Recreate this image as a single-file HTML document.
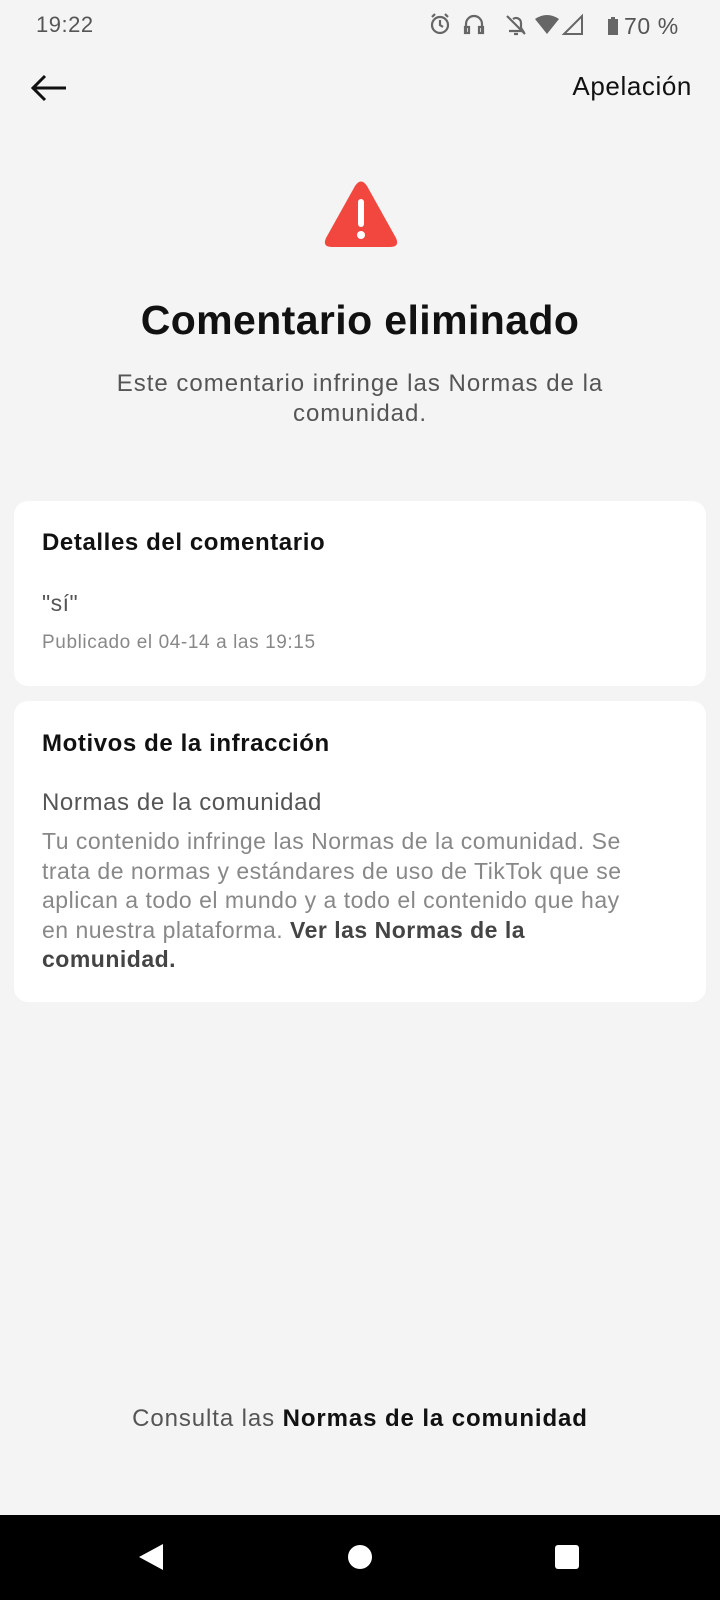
<!DOCTYPE html>
<html><head><meta charset="utf-8"><style>
*{margin:0;padding:0;box-sizing:border-box}
body{width:720px;height:1600px;background:#f4f4f4;font-family:"Liberation Sans",sans-serif;position:relative;overflow:hidden;color:#111}
.a{position:absolute}
.card{position:absolute;left:14px;width:692px;background:#fff;border-radius:14px}
</style></head><body>
<div class="a" style="left:36px;top:12px;font-size:22px;color:#555;letter-spacing:0.5px">19:22</div>
<svg class="a" style="left:428px;top:10px" width="280" height="30" viewBox="0 0 280 30">
<g fill="none" stroke="#666" stroke-width="2.2"><circle cx="12" cy="15" r="8"/><path d="M12 10v5l3 2M4 7l3-3M20 7l-3-3"/>
<path d="M38 22v-8a8 8 0 0 1 16 0v8"/><rect x="37" y="17" width="4" height="6"/><rect x="51" y="17" width="4" height="6"/>
<path d="M81 21h14l-2-3v-5a5 5 0 0 0-8-4M79 6l18 18M86 24h4"/></g>
<path d="M107 9q12-8 24 0l-12 15z" fill="#666"/><path d="M154 6v18h-18z" fill="none" stroke="#666" stroke-width="2"/>
<rect x="180" y="9" width="10" height="16" fill="#666"/><rect x="183" y="7" width="4" height="2" fill="#666"/>
<text x="196" y="24" font-family="Liberation Sans" font-size="23" fill="#555" letter-spacing="0.6">70 %</text></svg>
<svg class="a" style="left:30px;top:74px" width="38" height="28" viewBox="0 0 38 28"><path d="M36 14H3M15 2L3 14l12 12" fill="none" stroke="#111" stroke-width="3"/></svg>
<div class="a" style="right:28px;top:71px;font-size:26px;letter-spacing:0.6px">Apelación</div>
<svg class="a" style="left:324px;top:181px" width="74" height="68" viewBox="0 0 74 68"><path d="M31 5q6-9 12 0l29 52q4 9-6 9H8q-10 0-6-9z" fill="#f2473f"/><rect x="34" y="18" width="6" height="28" rx="3" fill="#fff"/><circle cx="37" cy="54" r="4" fill="#fff"/></svg>
<div class="a" style="left:0;width:720px;top:297px;text-align:center;font-size:41px;font-weight:bold;letter-spacing:0.4px">Comentario eliminado</div>
<div class="a" style="left:0;width:720px;top:369px;text-align:center;font-size:24px;line-height:30px;color:#555;letter-spacing:1px">Este comentario infringe las Normas de la<br>comunidad.</div>
<div class="card" style="top:501px;height:185px">
<div class="a" style="left:28px;top:28px;font-size:24px;font-weight:bold;letter-spacing:0.6px">Detalles del comentario</div>
<div class="a" style="left:28px;top:89px;font-size:23px;color:#555;letter-spacing:0.5px">"sí"</div>
<div class="a" style="left:28px;top:131px;font-size:19px;color:#888;letter-spacing:0.6px">Publicado el 04-14 a las 19:15</div>
</div>
<div class="card" style="top:701px;height:301px">
<div class="a" style="left:28px;top:29px;font-size:24px;font-weight:bold;letter-spacing:0.6px">Motivos de la infracción</div>
<div class="a" style="left:28px;top:88px;font-size:24px;color:#555;letter-spacing:0.6px">Normas de la comunidad</div>
<div class="a" style="left:28px;top:126px;width:600px;font-size:23px;line-height:29.6px;color:#888;letter-spacing:0.5px">Tu contenido infringe las Normas de la comunidad. Se trata de normas y estándares de uso de TikTok que se aplican a todo el mundo y a todo el contenido que hay en nuestra plataforma. <b style="color:#444">Ver las Normas de la comunidad.</b></div>
</div>
<div class="a" style="left:0;width:720px;top:1405px;text-align:center;font-size:24px;color:#555;letter-spacing:0.9px">Consulta las <b style="color:#111">Normas de la comunidad</b></div>
<div class="a" style="left:0;top:1515px;width:720px;height:85px;background:#000"></div>
<svg class="a" style="left:0;top:1515px" width="720" height="85"><path d="M163 29v26L139 42z" fill="#fff"/><circle cx="360" cy="42" r="12" fill="#fff"/><rect x="555" y="30" width="24" height="24" rx="3" fill="#fff"/></svg>
</body></html>
